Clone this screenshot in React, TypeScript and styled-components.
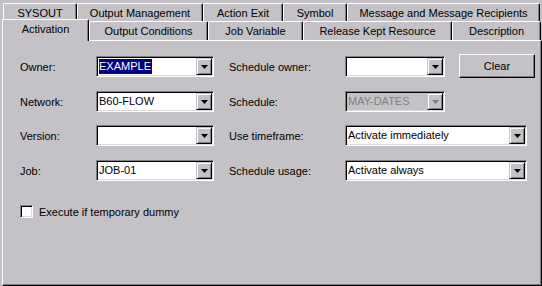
import React from 'react'
import styled, { createGlobalStyle } from 'styled-components'

const FACE = '#c4c2c6'

const GlobalStyle = createGlobalStyle`
  html, body {
    margin: 0;
    padding: 0;
    background: ${FACE};
  }
  body {
    font-family: "Liberation Sans", Arial, sans-serif;
    font-size: 11px;
    color: #000;
  }
`

const Window = styled.div`
  width: 542px;
  height: 286px;
  background: ${FACE};
  box-sizing: border-box;
  padding-top: 3px;
  overflow: hidden;
`

const TabRow = styled.div<{ $indent: number; $h: number }>`
  display: flex;
  height: ${p => p.$h}px;
  padding-left: ${p => p.$indent}px;
`

const Tab = styled.div<{ $w: number; $active?: boolean }>`
  position: relative;
  z-index: ${p => (p.$active ? 2 : 0)};
  width: ${p => p.$w}px;
  height: ${p => (p.$active ? 'calc(100% + 3px)' : '100%')};
  margin-top: ${p => (p.$active ? -2 : 0)}px;
  box-sizing: border-box;
  background: ${FACE};
  border-top: 1px solid #fff;
  border-left: 1px solid #fff;
  border-right: 1px solid #000;
  border-radius: 2px 2px 0 0;
  box-shadow: inset -1px 0 0 #808080;
  display: flex;
  align-items: center;
  justify-content: center;
  padding-bottom: ${p => (p.$active ? 3 : 0)}px;
  white-space: nowrap;
`

const Panel = styled.div`
  position: relative;
  z-index: 1;
  margin-left: 2px;
  width: 540px;
  height: 246px;
  box-sizing: border-box;
  border-top: 1px solid #fff;
  border-left: 1px solid #fff;
  border-right: 1px solid #000;
  border-bottom: 1px solid #000;
  box-shadow: inset -1px -1px 0 #808080;
  padding: 15px 0 0 17px;
  display: flex;
  flex-direction: column;
`

const Row = styled.div<{ $top: number }>`
  display: flex;
  align-items: center;
  height: 21px;
  margin-top: ${p => p.$top}px;
`

const Label = styled.div<{ $w: number; $gap?: number }>`
  width: ${p => p.$w}px;
  margin-left: ${p => p.$gap ?? 0}px;
  white-space: nowrap;
`

const Combo = styled.div<{ $w: number; $disabled?: boolean }>`
  width: ${p => p.$w}px;
  height: 21px;
  box-sizing: border-box;
  border-top: 1px solid #808080;
  border-left: 1px solid #808080;
  border-right: 1px solid #fff;
  border-bottom: 1px solid #fff;
  box-shadow: inset 1px 1px 0 #000, inset -1px -1px 0 #dcdbde;
  background: ${p => (p.$disabled ? FACE : '#fff')};
  color: ${p => (p.$disabled ? '#808080' : '#000')};
  display: flex;
  align-items: center;
  padding: 1px;
`

const Value = styled.span<{ $selected?: boolean }>`
  margin-left: 1px;
  line-height: 15px;
  padding: 0 1px 0 0;
  background: ${p => (p.$selected ? '#000080' : 'transparent')};
  color: ${p => (p.$selected ? '#fff' : 'inherit')};
  white-space: nowrap;
`

const DropButton = styled.div`
  margin-left: auto;
  width: 16px;
  height: 17px;
  box-sizing: border-box;
  background: ${FACE};
  border-top: 1px solid ${FACE};
  border-left: 1px solid ${FACE};
  border-right: 1px solid #000;
  border-bottom: 1px solid #000;
  box-shadow: inset 1px 1px 0 #fff, inset -1px -1px 0 #808080;
  display: flex;
  align-items: center;
  justify-content: center;
`

const PushButton = styled.div`
  align-self: flex-start;
  margin-top: -2px;
  margin-left: 14px;
  width: 76px;
  height: 24px;
  box-sizing: border-box;
  border-top: 1px solid #fff;
  border-left: 1px solid #fff;
  border-right: 1px solid #000;
  border-bottom: 1px solid #000;
  box-shadow: inset -1px -1px 0 #808080;
  display: flex;
  align-items: center;
  justify-content: center;
`

const CheckRow = styled.label`
  display: flex;
  align-items: center;
  gap: 6px;
  margin-top: 24px;
  height: 13px;
`

const CheckBox = styled.span`
  width: 13px;
  height: 13px;
  box-sizing: border-box;
  background: #fff;
  border-top: 1px solid #808080;
  border-left: 1px solid #808080;
  border-right: 1px solid #fff;
  border-bottom: 1px solid #fff;
  box-shadow: inset 1px 1px 0 #000, inset -1px -1px 0 #dcdbde;
`

const Arrow: React.FC<{ color?: string }> = ({ color = '#000' }) => (
  <svg width="7" height="4" viewBox="0 0 7 4">
    <polygon points="0,0 7,0 3.5,4" fill={color} />
  </svg>
)

const Select: React.FC<{ w: number; value?: string; selected?: boolean; disabled?: boolean }> = props => (
  <Combo $w={props.w} $disabled={props.disabled}>
    {props.value && <Value $selected={props.selected}>{props.value}</Value>}
    <DropButton>
      <Arrow color={props.disabled ? '#808080' : '#000'} />
    </DropButton>
  </Combo>
)

const topTabs = [
  { label: 'SYSOUT', w: 74 },
  { label: 'Output Management', w: 126 },
  { label: 'Action Exit', w: 80 },
  { label: 'Symbol', w: 64 },
  { label: 'Message and Message Recipients', w: 193 },
]

const bottomTabs = [
  { label: 'Activation', w: 87, active: true },
  { label: 'Output Conditions', w: 119 },
  { label: 'Job Variable', w: 95 },
  { label: 'Release Kept Resource', w: 149 },
  { label: 'Description', w: 89 },
]

export default function App() {
  return (
    <>
      <GlobalStyle />
      <Window>
        <TabRow $indent={3} $h={18}>
          {topTabs.map(t => (
            <Tab key={t.label} $w={t.w}>{t.label}</Tab>
          ))}
        </TabRow>
        <TabRow $indent={2} $h={19}>
          {bottomTabs.map(t => (
            <Tab key={t.label} $w={t.w} $active={t.active}>{t.label}</Tab>
          ))}
        </TabRow>
        <Panel>
          <Row $top={0}>
            <Label $w={76}>Owner:</Label>
            <Select w={118} value="EXAMPLE" selected />
            <Label $w={116} $gap={15}>Schedule owner:</Label>
            <Select w={100} />
            <PushButton>Clear</PushButton>
          </Row>
          <Row $top={14}>
            <Label $w={76}>Network:</Label>
            <Select w={118} value="B60-FLOW" />
            <Label $w={116} $gap={15}>Schedule:</Label>
            <Select w={100} value="MAY-DATES" disabled />
          </Row>
          <Row $top={13}>
            <Label $w={76}>Version:</Label>
            <Select w={118} />
            <Label $w={116} $gap={15}>Use timeframe:</Label>
            <Select w={182} value="Activate immediately" />
          </Row>
          <Row $top={14}>
            <Label $w={76}>Job:</Label>
            <Select w={118} value="JOB-01" />
            <Label $w={116} $gap={15}>Schedule usage:</Label>
            <Select w={182} value="Activate always" />
          </Row>
          <CheckRow>
            <CheckBox />
            Execute if temporary dummy
          </CheckRow>
        </Panel>
      </Window>
    </>
  )
}
